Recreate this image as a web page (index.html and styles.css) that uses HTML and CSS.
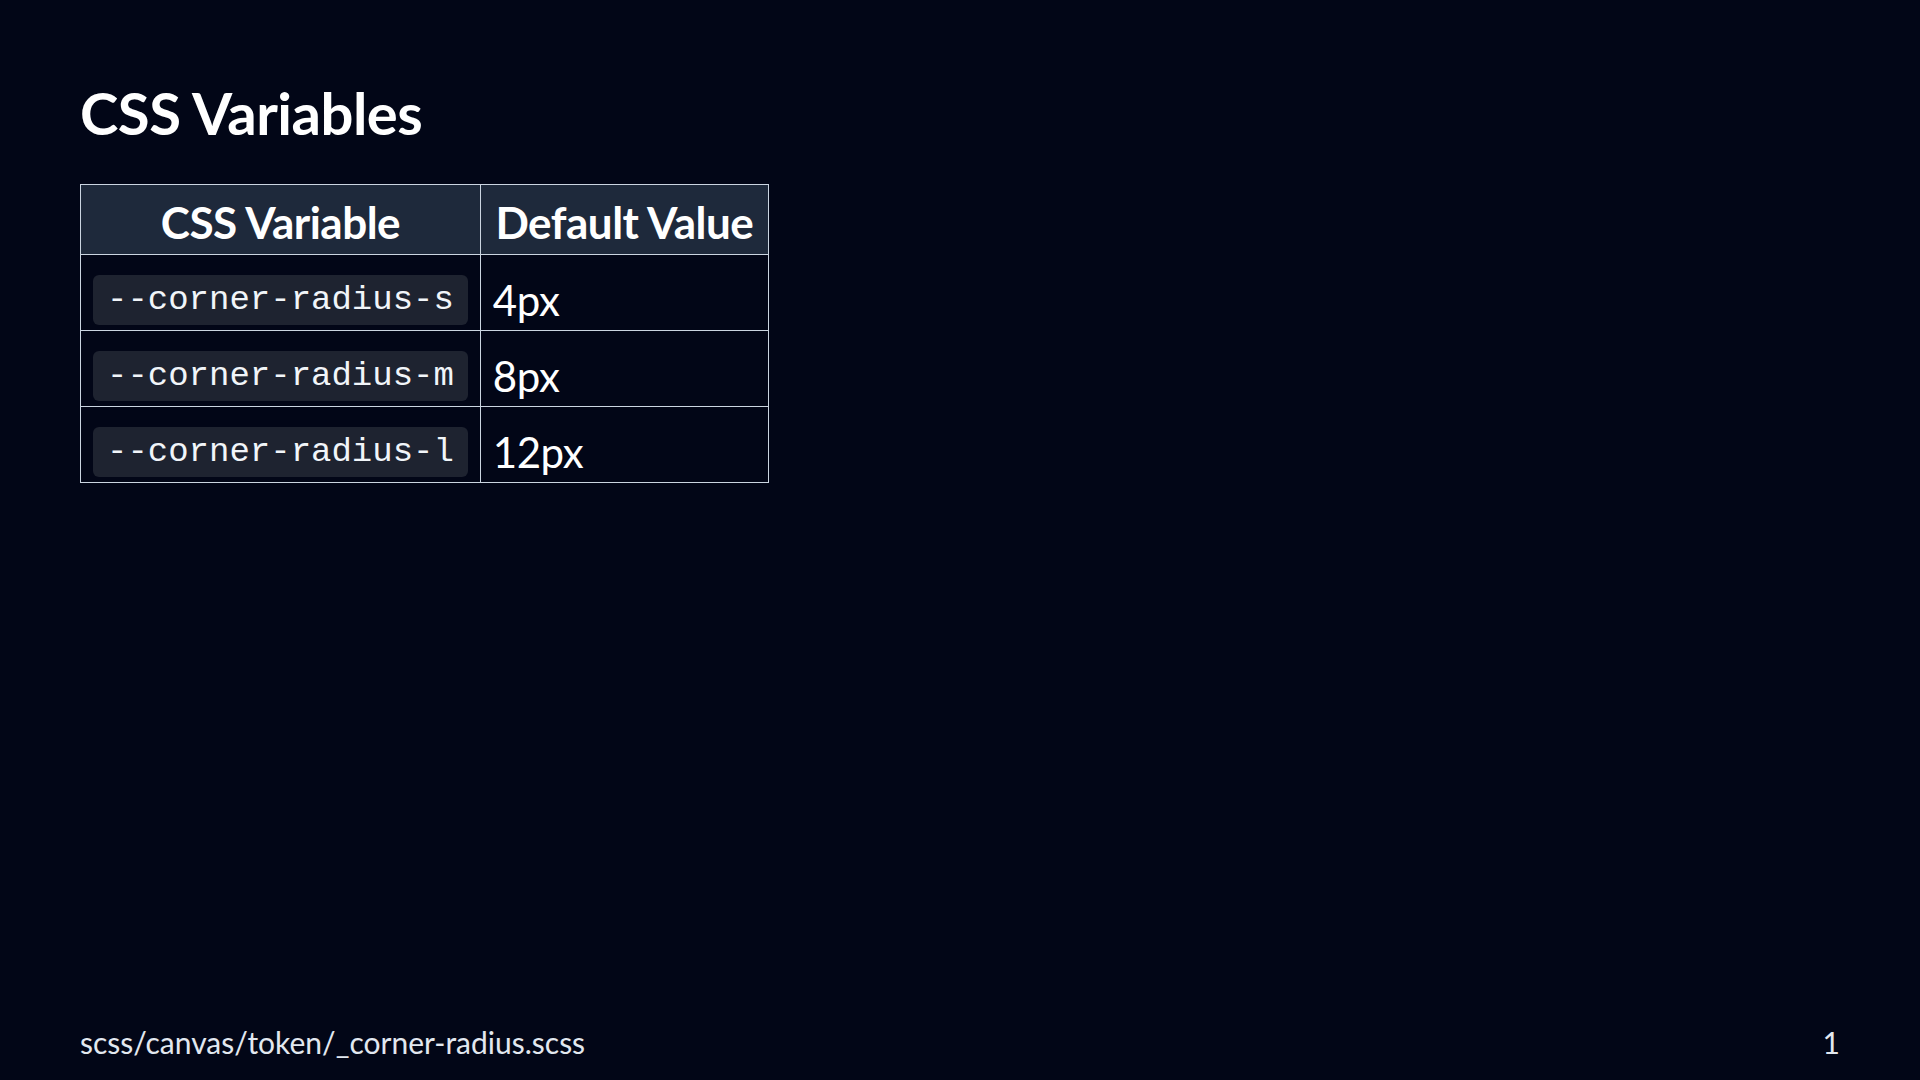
FILE: index.html
```html
<!DOCTYPE html>
<html lang="en">
<head>
<meta charset="utf-8">
<title>CSS Variables</title>
<link rel="stylesheet" href="styles.css">
</head>
<body>
<main class="slide">
  <section class="content">
    <h1 class="title">CSS Variables</h1>
    <table class="vars">
      <thead>
        <tr><th>CSS Variable</th><th class="val-head">Default Value</th></tr>
      </thead>
      <tbody>
        <tr><td class="var"><code class="chip">--corner-radius-s</code></td><td class="val">4px</td></tr>
        <tr><td class="var"><code class="chip">--corner-radius-m</code></td><td class="val">8px</td></tr>
        <tr><td class="var"><code class="chip">--corner-radius-l</code></td><td class="val">12px</td></tr>
      </tbody>
    </table>
  </section>
  <footer class="footer">
    <span class="path">scss/canvas/token/_corner-radius.scss</span>
    <span class="page">1</span>
  </footer>
</main>
</body>
</html>
```

FILE: styles.css
```css
html, body {
  margin: 0;
  padding: 0;
  background: #020617;
}
body {
  font-family: Lato, "Noto Sans", sans-serif;
  color: #ffffff;
}
.slide {
  width: 1920px;
  height: 1080px;
  box-sizing: border-box;
  padding: 0 80px;
  display: flex;
  flex-direction: column;
}
.content {
  flex: 1;
  padding-top: 76px;
}
.title {
  margin: 0 0 34px 0;
  font-size: 58px;
  font-weight: 700;
  line-height: 74px;
  letter-spacing: -0.5px;
}
.vars {
  border-collapse: collapse;
  border: 1px solid #cbd5e1;
}
.vars th, .vars td {
  border: 1px solid #cbd5e1;
  padding: 0 12px;
  white-space: nowrap;
}
.vars th {
  background: #1e293b;
  font-size: 44px;
  font-weight: 700;
  height: 70px;
  letter-spacing: -0.5px;
  padding-top: 4px;
  box-sizing: border-box;
}
.val-head {
  width: 288px;
  text-align: center;
}
.vars td {
  height: 76px;
  box-sizing: border-box;
  padding-top: 15px;
  padding-bottom: 1px;
}
.val {
  font-size: 42px;
  letter-spacing: -0.5px;
}
.chip {
  display: inline-block;
  font-family: "Liberation Mono", monospace;
  font-size: 34px;
  line-height: 50px;
  background: #1e2330;
  border-radius: 6px;
  padding: 0 14px;
  color: #f1f5f9;
  vertical-align: middle;
}
.footer {
  display: flex;
  justify-content: space-between;
  align-items: baseline;
  height: 56px;
  font-size: 30px;
  color: #e2e8f0;
}
```
